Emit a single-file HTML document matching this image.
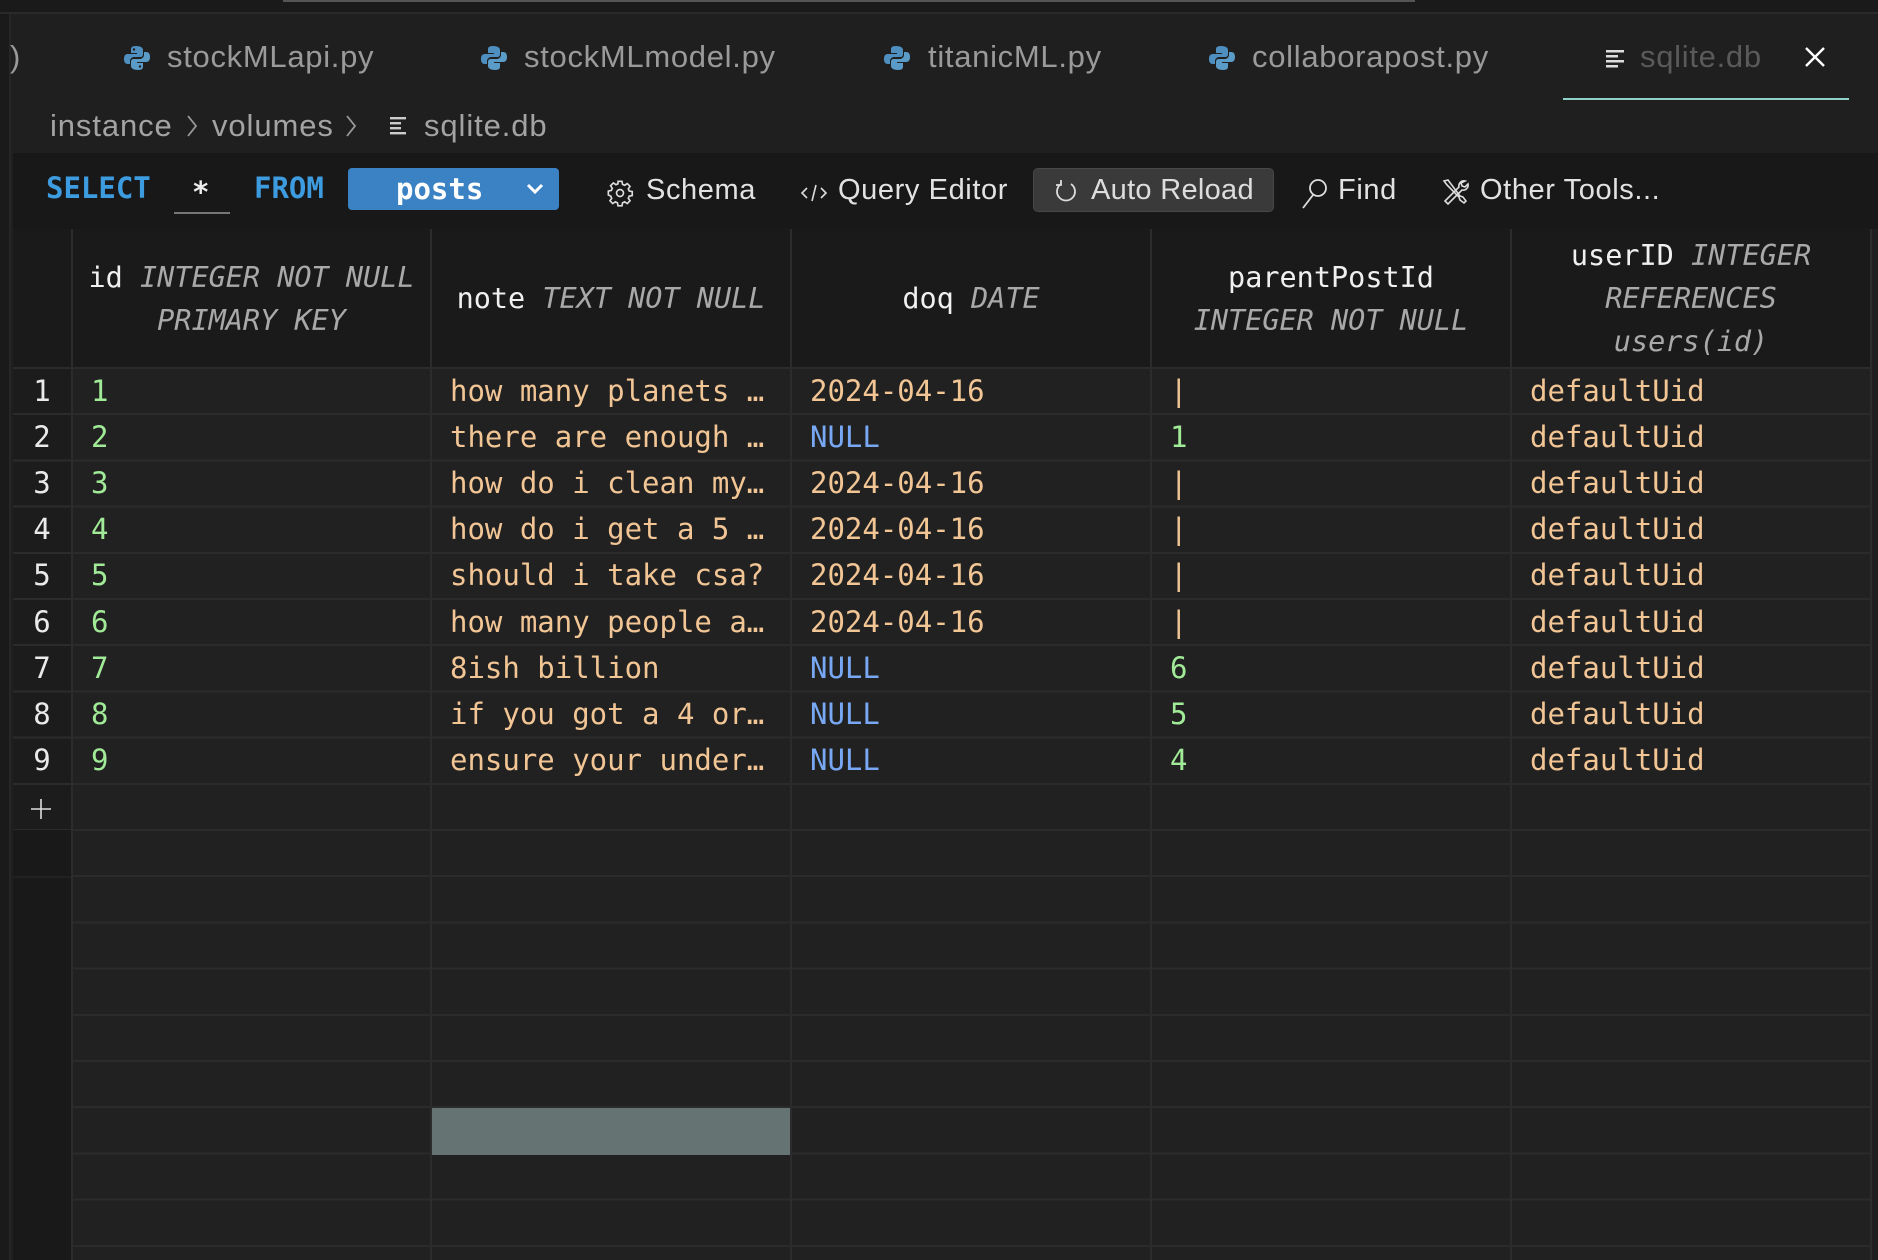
<!DOCTYPE html>
<html><head><meta charset="utf-8">
<style>
*{margin:0;padding:0;box-sizing:border-box}
body{width:1878px;height:1260px;background:#1f1f1f;position:relative;overflow:hidden;font-family:"Liberation Sans",sans-serif}
.a{position:absolute;white-space:nowrap}
.mono{font-family:"DejaVu Sans Mono","Liberation Mono",monospace}
.tab{color:#9a9a9a;font-size:31px;letter-spacing:0.7px;top:39px;line-height:36px}
.tb{color:#e2e2e2;font-size:29px;letter-spacing:0.6px;top:172px;line-height:36px}
.bc{font-size:31px;letter-spacing:0.9px;color:#a3a3a3;line-height:36px;top:108px}
.hd{font-family:"DejaVu Sans Mono","Liberation Mono",monospace;font-size:28.5px;color:#f0f0f0;text-align:center;line-height:43px}
.hd i{color:#a9a9a9}
.vl{position:absolute;top:229px;width:2px;height:1031px;background:#2c2c2c}
.row{position:absolute;left:0;height:46px;line-height:46px;font-family:"DejaVu Sans Mono","Liberation Mono",monospace;font-size:29px;width:1878px}
.row span{position:absolute}
.n{color:#eaeaea;left:12px;width:60px;text-align:center}
.g{color:#a1ea97}
.p{color:#f2c595}
.b{color:#78a8f4}
</style></head><body>
<div class="a" style="left:0;top:0;width:1878px;height:14px;background:#1a1a1a;border-bottom:2px solid #2a2a2a"></div>
<div class="a" style="left:283px;top:0;width:1132px;height:2px;background:#555"></div>
<div class="a" style="left:0;top:14px;width:11px;height:1246px;background:#1a1a1a;border-right:2px solid #262626"></div>
<div class="a tab" style="left:10px;">)</div>
<svg class="a" style="left:124px;top:45px" width="26" height="26" viewBox="0 0 26 26"><path d="M12 1c-5 0-5 2-5 4v3h6v1H4c-3 0-4 2-4 5s1 5 4 5h2v-3c0-2 2-4 4-4h6c2 0 3-1 3-3V5c0-2-2-4-7-4z" fill="#4f8fbf"/><path d="M14 25c5 0 5-2 5-4v-3h-6v-1h9c3 0 4-2 4-5s-1-5-4-5h-2v3c0 2-2 4-4 4h-6c-2 0-3 1-3 3v4c0 2 2 4 7 4z" fill="#5b9bc8"/><circle cx="10" cy="4.5" r="1.2" fill="#1f1f1f"/><circle cx="16" cy="21.5" r="1.2" fill="#1f1f1f"/></svg>
<div class="a tab" style="left:167px">stockMLapi.py</div>
<svg class="a" style="left:481px;top:45px" width="26" height="26" viewBox="0 0 26 26"><path d="M12 1c-5 0-5 2-5 4v3h6v1H4c-3 0-4 2-4 5s1 5 4 5h2v-3c0-2 2-4 4-4h6c2 0 3-1 3-3V5c0-2-2-4-7-4z" fill="#4f8fbf"/><path d="M14 25c5 0 5-2 5-4v-3h-6v-1h9c3 0 4-2 4-5s-1-5-4-5h-2v3c0 2-2 4-4 4h-6c-2 0-3 1-3 3v4c0 2 2 4 7 4z" fill="#5b9bc8"/></svg>
<div class="a tab" style="left:524px">stockMLmodel.py</div>
<svg class="a" style="left:884px;top:45px" width="26" height="26" viewBox="0 0 26 26"><path d="M12 1c-5 0-5 2-5 4v3h6v1H4c-3 0-4 2-4 5s1 5 4 5h2v-3c0-2 2-4 4-4h6c2 0 3-1 3-3V5c0-2-2-4-7-4z" fill="#4f8fbf"/><path d="M14 25c5 0 5-2 5-4v-3h-6v-1h9c3 0 4-2 4-5s-1-5-4-5h-2v3c0 2-2 4-4 4h-6c-2 0-3 1-3 3v4c0 2 2 4 7 4z" fill="#5b9bc8"/></svg>
<div class="a tab" style="left:928px">titanicML.py</div>
<svg class="a" style="left:1209px;top:45px" width="26" height="26" viewBox="0 0 26 26"><path d="M12 1c-5 0-5 2-5 4v3h6v1H4c-3 0-4 2-4 5s1 5 4 5h2v-3c0-2 2-4 4-4h6c2 0 3-1 3-3V5c0-2-2-4-7-4z" fill="#4f8fbf"/><path d="M14 25c5 0 5-2 5-4v-3h-6v-1h9c3 0 4-2 4-5s-1-5-4-5h-2v3c0 2-2 4-4 4h-6c-2 0-3 1-3 3v4c0 2 2 4 7 4z" fill="#5b9bc8"/></svg>
<div class="a tab" style="left:1252px">collaborapost.py</div>
<svg class="a" style="left:1605px;top:47px" width="22" height="22" viewBox="0 0 22 22" fill="#ddd"><rect x="1" y="3" width="18" height="2.5"/><rect x="1" y="8" width="12" height="2.5"/><rect x="1" y="13" width="18" height="2.5"/><rect x="1" y="18" width="12" height="2.5"/></svg>
<div class="a tab" style="left:1640px;color:#5a5a5a">sqlite.db</div>
<svg class="a" style="left:1804px;top:46px" width="22" height="22" viewBox="0 0 22 22"><path d="M2 2L20 20M20 2L2 20" stroke="#fff" stroke-width="2.4"/></svg>
<div class="a" style="left:1563px;top:98px;width:286px;height:2px;background:#8fd0c8"></div>
<div class="a bc" style="left:50px">instance</div>
<svg class="a" style="left:185px;top:113px" width="14" height="26" viewBox="0 0 14 26"><path d="M3 3L11 13L3 23" stroke="#999" stroke-width="1.8" fill="none"/></svg>
<div class="a bc" style="left:212px">volumes</div>
<svg class="a" style="left:344px;top:113px" width="14" height="26" viewBox="0 0 14 26"><path d="M3 3L11 13L3 23" stroke="#999" stroke-width="1.8" fill="none"/></svg>
<svg class="a" style="left:389px;top:115px" width="22" height="22" viewBox="0 0 22 22" fill="#ccc"><rect x="1" y="2" width="16" height="2.4"/><rect x="1" y="7" width="11" height="2.4"/><rect x="1" y="12" width="11" height="2.4"/><rect x="1" y="17" width="16" height="2.4"/></svg>
<div class="a bc" style="left:424px">sqlite.db</div>
<div class="a" style="left:13px;top:153px;width:1865px;height:76px;background:#181818"></div>
<div class="a mono" style="left:46px;top:170px;font-size:29px;font-weight:bold;color:#3d9be0;line-height:36px">SELECT</div>
<div class="a mono" style="left:192px;top:174px;font-size:29px;font-weight:bold;color:#eee;line-height:36px">*</div>
<div class="a" style="left:174px;top:212px;width:56px;height:2px;background:#777"></div>
<div class="a mono" style="left:254px;top:170px;font-size:29px;font-weight:bold;color:#3d9be0;line-height:36px">FROM</div>
<div class="a" style="left:348px;top:168px;width:211px;height:42px;background:#3a82c4;border-radius:4px"></div>
<div class="a mono" style="left:396px;top:171px;font-size:29px;font-weight:bold;color:#fff;line-height:36px">posts</div>
<svg class="a" style="left:525px;top:182px" width="20" height="14" viewBox="0 0 20 14"><path d="M3 3L10 10L17 3" stroke="#fff" stroke-width="3" fill="none"/></svg>
<svg class="a" style="left:606px;top:179px" width="28" height="28" viewBox="0 0 24 24" fill="none" stroke="#ddd" stroke-width="1.4"><circle cx="12" cy="12" r="3"/><path d="M10.3 2h3.4l.5 2.6 1.8.8 2.2-1.5 2.4 2.4-1.5 2.2.8 1.8 2.6.5v3.4l-2.6.5-.8 1.8 1.5 2.2-2.4 2.4-2.2-1.5-1.8.8-.5 2.6h-3.4l-.5-2.6-1.8-.8-2.2 1.5-2.4-2.4 1.5-2.2-.8-1.8L2 13.7v-3.4l2.6-.5.8-1.8-1.5-2.2 2.4-2.4 2.2 1.5 1.8-.8z"/></svg>
<div class="a tb" style="left:646px">Schema</div>
<svg class="a" style="left:800px;top:181px" width="28" height="24" viewBox="0 0 28 24" fill="none" stroke="#ddd" stroke-width="1.6"><path d="M7 7L2 12L7 17M21 7L26 12L21 17M16 4L12 20"/></svg>
<div class="a tb" style="left:838px">Query Editor</div>
<div class="a" style="left:1033px;top:168px;width:241px;height:44px;background:#3a3a3a;border:1px solid #474747;border-radius:5px"></div>
<svg class="a" style="left:1053px;top:178px" width="26" height="28" viewBox="0 0 26 28" fill="none" stroke="#ddd" stroke-width="1.8"><path d="M8 6A9 9 0 1 0 18 6"/><path d="M8 2V7H3"/></svg>
<div class="a tb" style="left:1091px;color:#ddd;letter-spacing:0.3px">Auto Reload</div>
<svg class="a" style="left:1300px;top:176px" width="30" height="34" viewBox="0 0 30 34" fill="none" stroke="#ddd" stroke-width="1.8"><circle cx="18" cy="12" r="8"/><path d="M13 19L3 32"/></svg>
<div class="a tb" style="left:1338px">Find</div>
<svg class="a" style="left:1441px;top:178px" width="28" height="30" viewBox="0 0 28 30" fill="none" stroke="#ddd" stroke-width="1.6"><path d="M3 3l4-1 12 16 3 1 3 4-2 2-4-3-1-3L6 7z"/><path d="M24 3a5 5 0 0 0-6 6L4 23l3 3 14-14a5 5 0 0 0 6-6l-3 3-3-1-1-3z"/></svg>
<div class="a tb" style="left:1480px">Other Tools...</div>
<div class="a" style="left:13px;top:229px;width:1858px;height:138px;background:#1a1a1a"></div>
<div class="a" style="left:72px;top:367px;width:1799px;height:893px;background:repeating-linear-gradient(to bottom,#2b2b2b 0 2px,#212121 2px 46.2px)"></div>
<div class="a" style="left:13px;top:367px;width:59px;height:893px;background:#191919"></div>
<div class="a" style="left:13px;top:367px;width:59px;height:463px;background:repeating-linear-gradient(to bottom,#2b2b2b 0 2px,#1c1c1c 2px 46.2px)"></div>
<div class="a" style="left:13px;top:876px;width:59px;height:2px;background:#222"></div>
<div class="a" style="left:432px;top:1108px;width:360px;height:47px;background:#657373"></div>
<div class="vl" style="left:71px"></div>
<div class="vl" style="left:430px"></div>
<div class="vl" style="left:790px"></div>
<div class="vl" style="left:1150px"></div>
<div class="vl" style="left:1510px"></div>
<div class="vl" style="left:1870px"></div>
<div class="a hd" style="left:72px;width:359px;top:256px">id <i>INTEGER NOT NULL</i><br><i>PRIMARY KEY</i></div>
<div class="a hd" style="left:431px;width:360px;top:277px">note <i>TEXT NOT NULL</i></div>
<div class="a hd" style="left:791px;width:360px;top:277px">doq <i>DATE</i></div>
<div class="a hd" style="left:1151px;width:360px;top:256px">parentPostId<br><i>INTEGER NOT NULL</i></div>
<div class="a hd" style="left:1511px;width:360px;top:234px">userID <i>INTEGER</i><br><i>REFERENCES</i><br><i>users(id)</i></div>
<div class="row" style="top:368px"><span class="n">1</span><span class="g" style="left:91px">1</span><span class="p" style="left:450px">how many planets …</span><span class="p" style="left:810px">2024-04-16</span><span class="p" style="left:1170px">|</span><span class="p" style="left:1530px">defaultUid</span></div>
<div class="row" style="top:414px"><span class="n">2</span><span class="g" style="left:91px">2</span><span class="p" style="left:450px">there are enough …</span><span class="b" style="left:810px">NULL</span><span class="g" style="left:1170px">1</span><span class="p" style="left:1530px">defaultUid</span></div>
<div class="row" style="top:460px"><span class="n">3</span><span class="g" style="left:91px">3</span><span class="p" style="left:450px">how do i clean my…</span><span class="p" style="left:810px">2024-04-16</span><span class="p" style="left:1170px">|</span><span class="p" style="left:1530px">defaultUid</span></div>
<div class="row" style="top:506px"><span class="n">4</span><span class="g" style="left:91px">4</span><span class="p" style="left:450px">how do i get a 5 …</span><span class="p" style="left:810px">2024-04-16</span><span class="p" style="left:1170px">|</span><span class="p" style="left:1530px">defaultUid</span></div>
<div class="row" style="top:552px"><span class="n">5</span><span class="g" style="left:91px">5</span><span class="p" style="left:450px">should i take csa?</span><span class="p" style="left:810px">2024-04-16</span><span class="p" style="left:1170px">|</span><span class="p" style="left:1530px">defaultUid</span></div>
<div class="row" style="top:599px"><span class="n">6</span><span class="g" style="left:91px">6</span><span class="p" style="left:450px">how many people a…</span><span class="p" style="left:810px">2024-04-16</span><span class="p" style="left:1170px">|</span><span class="p" style="left:1530px">defaultUid</span></div>
<div class="row" style="top:645px"><span class="n">7</span><span class="g" style="left:91px">7</span><span class="p" style="left:450px">8ish billion</span><span class="b" style="left:810px">NULL</span><span class="g" style="left:1170px">6</span><span class="p" style="left:1530px">defaultUid</span></div>
<div class="row" style="top:691px"><span class="n">8</span><span class="g" style="left:91px">8</span><span class="p" style="left:450px">if you got a 4 or…</span><span class="b" style="left:810px">NULL</span><span class="g" style="left:1170px">5</span><span class="p" style="left:1530px">defaultUid</span></div>
<div class="row" style="top:737px"><span class="n">9</span><span class="g" style="left:91px">9</span><span class="p" style="left:450px">ensure your under…</span><span class="b" style="left:810px">NULL</span><span class="g" style="left:1170px">4</span><span class="p" style="left:1530px">defaultUid</span></div>
<svg class="a" style="left:30px;top:798px" width="22" height="22" viewBox="0 0 22 22"><path d="M11 1V21M1 11H21" stroke="#ddd" stroke-width="1.6"/></svg>
</body></html>
